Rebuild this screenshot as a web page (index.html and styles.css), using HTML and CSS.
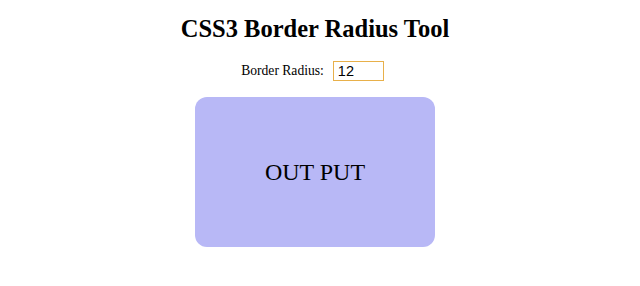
FILE: index.html
```html
<!DOCTYPE html>
<html lang="en">
<head>
    <meta charset="UTF-8">
    <title>CSS3 Border Radius Tool</title>
    <link rel="stylesheet" href="styles.css">
</head>
<body>

    <h1>CSS3 Border Radius Tool</h1>

    <div class="controls">
        <label for="radius">Border Radius:</label>
        <input type="text" id="radius" value="12">
    </div>

    <div class="output">OUT PUT</div>

</body>
</html>
```

FILE: styles.css
```css
body {
    font-family: "Liberation Serif", "Times New Roman", serif;
    margin: 0;
    padding-right: 10px;
    background-color: #ffffff;
    color: #000000;
}
h1 {
    text-align: center;
    font-size: 24.5px;
    line-height: 28px;
    margin: 15px 0 0;
}
.controls {
    display: flex;
    justify-content: center;
    align-items: center;
    gap: 9px;
    margin-top: 18px;
    padding-right: 5px;
    font-size: 13.6px;
}
.controls input {
    width: 51px;
    height: 20px;
    box-sizing: border-box;
    padding: 1px 4px;
    border: 1px solid #e8b04a;
    font-family: "Liberation Sans", Arial, sans-serif;
    font-size: 14.5px;
    outline: none;
}
.output {
    width: 240px;
    height: 150px;
    margin: 16px auto 0;
    background-color: #b8b8f6;
    border-radius: 12px;
    display: flex;
    align-items: center;
    justify-content: center;
    font-size: 24px;
}
```
